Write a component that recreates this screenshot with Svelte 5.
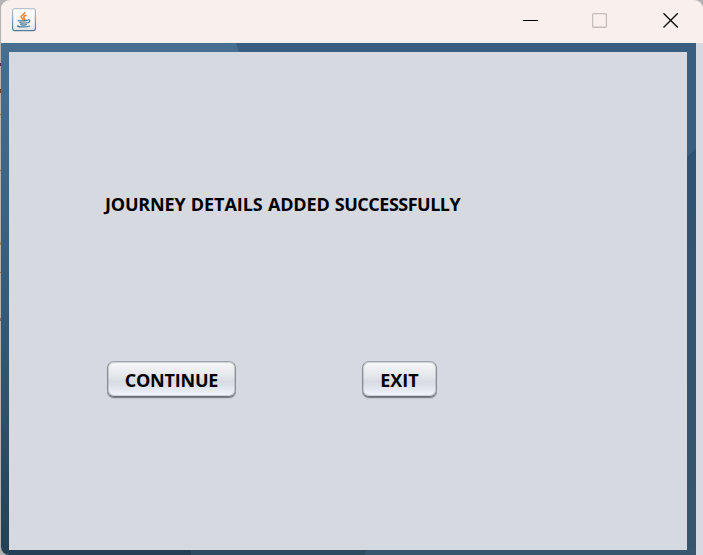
<script>
  const words = [
    { text: 'JOURNEY', spacing: -0.18 },
    { text: 'DETAILS', spacing: -0.05 },
    { text: 'ADDED', spacing: -0.18 },
    { text: 'SUCCESSFULLY', spacing: -0.5 },
  ];
</script>

<div class="desktop">
  <div class="window">
    <header>
      <svg class="logo" width="24" height="24" viewBox="0 0 24 24">
        <defs>
          <linearGradient id="edge" x1="0" y1="0" x2="0" y2="1">
            <stop offset="0" stop-color="#b9c5ce" />
            <stop offset="1" stop-color="#557c96" />
          </linearGradient>
          <linearGradient id="face" x1="0" y1="0" x2="0" y2="1">
            <stop offset="0" stop-color="#fff" />
            <stop offset=".65" stop-color="#f5f6f7" />
            <stop offset="1" stop-color="#dde3e8" />
          </linearGradient>
        </defs>
        <rect x=".6" y=".6" width="22.8" height="22" rx="2" fill="url(#face)" stroke="url(#edge)" stroke-width="1.2" />
        <path d="M12.6 4c1 2-4.2 3.200-3.400 5.200.4 1 1.600 1.600 2 2.400M14.600 7c-2.800 1-3.600 2-2.400 3.200.6.7.2 1.300-.4 1.800" fill="none" stroke="#ed8b3b" stroke-width="1.700" />
        <path d="M6.500 12.100c-2 .8 5.500 1.300 9.300 0M7.500 14.300c1.200 1 6 1 8 .2M8.300 16.300c1.500.9 4.500.9 6.500.1M16 11.900c2.700-.6 2.500 2.200-.5 3.100M6.500 17.400c-4 1.400 7.500 2.500 11.500.3" fill="none" stroke="#4b7a9b" stroke-width="1.300" />
      </svg>
      <div class="controls">
        <svg width="16" height="16" viewBox="0 0 16 16"><path d="M0 8.500h15" stroke="#000" /></svg>
        <svg width="16" height="16" viewBox="0 0 16 16"><rect x=".6" y="1.600" width="13.800" height="13.600" rx="1" fill="none" stroke="#c5bfbd" stroke-width="1.400" /></svg>
        <svg width="16" height="16" viewBox="0 0 16 16"><path d="M.5 1.200l14.300 14.300M14.800 1.200L.5 15.500" stroke="#111" stroke-width="1.400" /></svg>
      </div>
    </header>
    <div class="body">
      <main>
        <p>{#each words as word, i}{i ? ' ' : ''}<span style="letter-spacing: {word.spacing}px">{word.text}</span>{/each}</p>
        <div class="actions">
          <button class="continue"><span>CONTINUE</span></button>
          <button class="exit"><span>EXIT</span></button>
        </div>
      </main>
      <svg class="backdrop" width="695" height="512" viewBox="0 0 695 512">
        <defs>
          <linearGradient id="left" x1="0" y1="0" x2="0" y2="1">
            <stop offset="0" stop-color="#476f90" />
            <stop offset=".5" stop-color="#365b78" />
            <stop offset=".75" stop-color="#2e4f67" />
            <stop offset="1" stop-color="#234055" />
          </linearGradient>
          <linearGradient id="right" x1="0" y1="0" x2="0" y2="1">
            <stop offset="0" stop-color="#305273" />
            <stop offset="1" stop-color="#36566d" />
          </linearGradient>
        </defs>
        <path fill="url(#left)" d="M0 0h695v512H0z" />
        <path fill="#3a5e80" d="M235 0h460v105l-9 9V9H238z" />
        <path fill="url(#right)" d="M686 114l9-9v407h-9z" />
        <path fill="#2d4b61" d="M190 507h176v5H190z" />
        <path fill="#36576d" d="M365 507h330v5H364z" />
      </svg>
    </div>
  </div>
</div>

<style>
  :global(body) {
    overflow: hidden;
  }
  .desktop {
    box-sizing: border-box;
    width: 703px;
    height: 555px;
    padding-left: 1px;
    overflow: hidden;
    background:
      linear-gradient(#5a2a66, #5a2a66) 0 63px / 1px 3px no-repeat,
      linear-gradient(#70472f, #70472f) 0 89px / 1px 4px no-repeat,
      linear-gradient(#a4783f, #a4783f) 0 114px / 1px 1px no-repeat,
      linear-gradient(#a4783f, #a4783f) 0 170px / 1px 1px no-repeat,
      linear-gradient(#9a8462, #9a8462) 0 242px / 1px 3px no-repeat,
      linear-gradient(#a4783f, #a4783f) 0 272px / 1px 1px no-repeat,
      linear-gradient(#7e6b74, #7e6b74) 0 318px / 1px 3px no-repeat,
      #b4b2b1;
  }
  .window {
    display: flex;
    flex-direction: column;
    height: 555px;
    border-radius: 9px 9px 0 8px;
    overflow: hidden;
    background: #d6d9e0;
  }
  header {
    display: flex;
    justify-content: space-between;
    box-sizing: border-box;
    height: 43px;
    padding: 8px 24px 0 11px;
    background: #f9f0ed;
  }
  .controls {
    display: flex;
    gap: 54px;
    padding-top: 4px;
  }
  .controls svg {
    display: block;
  }
  .controls svg:nth-child(2) {
    margin-left: -1px;
  }
  .controls svg:nth-child(3) {
    margin-left: 1px;
  }
  .body {
    display: grid;
    width: 695px;
    height: 512px;
  }
  .backdrop,
  main {
    grid-area: 1 / 1;
  }
  main {
    z-index: 1;
    box-sizing: border-box;
    width: 678px;
    height: 498px;
    margin: 9px 0 0 8px;
    padding: 139px 0 0 96px;
    background: #d6d9e0;
    color: #000;
    font: 700 18px/26px 'Open Sans', 'Noto Sans', sans-serif;
  }
  p {
    height: 26px;
    margin: 0;
    white-space: nowrap;
    word-spacing: 0.6px;
  }
  span {
    display: inline-block;
  }
  .actions {
    display: flex;
    gap: 126px;
    padding: 144px 0 0 2px;
  }
  button {
    box-sizing: border-box;
    height: 36px;
    padding: 2px 1px 0;
    border: 1px solid;
    border-color: #a0a3a8 #8b8e93 #6c7177 #8b8e93;
    border-radius: 7px;
    background: linear-gradient(#f7f8fa 0%, #e3e6eb 42%, #d8dbe2 58%, #dde1e9 70%, #f2f5fc 100%);
    box-shadow:
      inset 0 0 0 1px rgba(120, 124, 130, 0.3),
      0 1px 0 #7b7f85,
      0 2px 1px #c6c9d0;
    color: #000;
    font: 700 18px/32px 'Open Sans', 'Noto Sans', sans-serif;
    white-space: nowrap;
  }
  .continue {
    width: 129px;
    letter-spacing: -0.2px;
  }
  .exit {
    width: 75px;
  }
</style>
